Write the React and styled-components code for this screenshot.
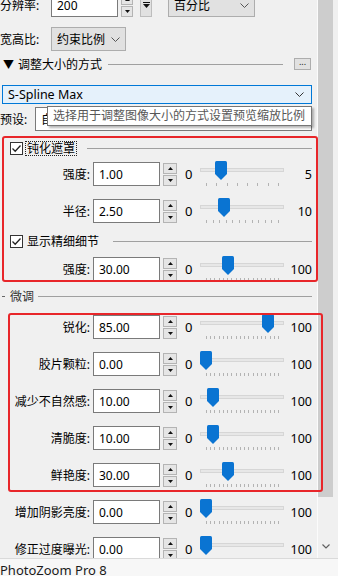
import React from "react";
import styled, { createGlobalStyle } from "styled-components";

const GlobalStyle = createGlobalStyle`
  html, body {
    margin: 0;
    padding: 0;
    background: #f0f0f0;
    overflow: hidden;
  }
  body {
    font-family: "Noto Sans", "Noto Sans CJK SC", sans-serif;
    font-size: 12px;
    color: #000;
  }
`;

const Window = styled.div`
  width: 338px;
  height: 576px;
  display: flex;
  flex-direction: column;
  background: #f0f0f0;
`;

const Main = styled.div`
  display: flex;
  height: 558px;
  overflow: hidden;
`;

const Panel = styled.div`
  width: 317px;
  flex: none;
`;

// scrolled a few pixels down, as in the capture
const Content = styled.div`
  margin-top: -7px;
  display: flex;
  flex-direction: column;
`;

const ScrollBar = styled.div`
  width: 21px;
  flex: none;
  box-sizing: border-box;
  border-left: 1px solid #fbfbfb;
  display: flex;
  flex-direction: column;
`;

const ScrollThumb = styled.div`
  width: 15px;
  height: 497px;
  background: #cdcdcd;
`;

const ScrollArrow = styled.div`
  margin: 47px 0 0 4px;
  line-height: 0;
`;

const StatusBar = styled.div`
  height: 18px;
  box-sizing: border-box;
  border-top: 1px solid #dadada;
  background: #f7f7f7;
  padding-top: 3px;
  font-size: 13px;
  line-height: 16px;
  color: #1a1a1a;
  overflow: hidden;
  white-space: nowrap;
`;

const TopRow = styled.div`
  display: flex;
  align-items: center;
  height: 24px;
  margin-top: ${({ $mt }) => $mt || 0}px;
`;

const TopLabel = styled.span`
  width: ${({ $w }) => $w}px;
  flex: none;
  white-space: nowrap;
`;

const TextBox = styled.div`
  width: ${({ $w }) => $w}px;
  height: 24px;
  flex: none;
  box-sizing: border-box;
  border: 1px solid #7a7a7a;
  background: #fff;
  padding-left: 5px;
  display: flex;
  align-items: center;
  white-space: nowrap;
  overflow: hidden;
`;

const Spin = styled.div`
  display: flex;
  flex-direction: column;
  gap: 1px;
  width: ${({ $w }) => $w}px;
  margin-left: ${({ $ml }) => $ml || 0}px;
  flex: none;
`;

const SpinBtn = styled.div`
  height: 11px;
  box-sizing: border-box;
  border: 1px solid #b4b4b4;
  background: #e5e5e5;
  display: flex;
  align-items: center;
  justify-content: center;
  line-height: 0;
`;

const IconBtn = styled.div`
  width: 12px;
  height: 24px;
  margin-left: 7px;
  flex: none;
  box-sizing: border-box;
  border: 1px solid #bdbdbd;
  background: #e1e1e1;
  display: flex;
  align-items: center;
  justify-content: center;
  line-height: 0;
`;

const Combo = styled.div`
  width: ${({ $w }) => ($w ? `${$w}px` : "auto")};
  flex: ${({ $w }) => ($w ? "none" : "1")};
  height: 24px;
  margin-left: ${({ $ml }) => $ml || 0}px;
  box-sizing: border-box;
  border: 1px solid ${({ $active }) => ($active ? "#0078d7" : "#adadad")};
  background: ${({ $active }) => ($active ? "#e5f1fb" : "#e1e1e1")};
  display: flex;
  align-items: center;
  justify-content: space-between;
  padding: 0 5px 0 5px;
  white-space: nowrap;
  font-size: ${({ $active }) => ($active ? "12.5px" : "12px")};
`;

const Header = styled.div`
  display: flex;
  align-items: center;
  height: 16px;
  margin-top: 5px;
  padding-left: 3px;
`;

const Arrow = styled.span`
  font-size: 11px;
  margin-right: 4px;
`;

const Rule = styled.div`
  flex: 1;
  height: 1px;
  background: #a0a0a0;
  margin: ${({ $m }) => $m};
`;

const MoreBtn = styled.div`
  width: 17px;
  height: 12px;
  margin-right: 6px;
  box-sizing: border-box;
  border: 1px solid #adadad;
  background: #e1e1e1;
  font-size: 9px;
  line-height: 6px;
  text-align: center;
  color: #222;
`;

const MethodCombo = styled(Combo)`
  margin: 13px 5px 0 2px;
  padding: 0 7px 0 5px;
`;

const PresetRow = styled.div`
  position: relative;
  display: flex;
  align-items: center;
  height: 24px;
  margin-top: 3px;
  padding-right: 5px;
`;

const PresetBox = styled(TextBox)`
  flex: 1;
  width: auto;
`;

const Tooltip = styled.div`
  position: absolute;
  left: 47px;
  top: -1px;
  width: 265px;
  height: 20px;
  box-sizing: border-box;
  border: 1px solid #767676;
  background: #fff;
  box-shadow: 2px 2px 2px rgba(0, 0, 0, 0.28);
  padding-left: 5px;
  color: #575757;
  line-height: 18px;
  white-space: nowrap;
  z-index: 2;
`;

// red annotation rectangle drawn on top of the panel
const Marked = styled.div`
  position: relative;
  display: flex;
  flex-direction: column;
  margin-top: ${({ $mt }) => $mt}px;
  padding: ${({ $pad }) => $pad};
  &::after {
    content: "";
    position: absolute;
    inset: ${({ $inset }) => $inset};
    border: 2.5px solid #e8262a;
    border-radius: 3px;
    pointer-events: none;
    z-index: 3;
  }
`;

const CheckRow = styled.div`
  display: flex;
  align-items: center;
  height: 14px;
  margin-top: ${({ $mt }) => $mt}px;
  padding-left: 10px;
`;

const CheckBox = styled.span`
  width: 13px;
  height: 13px;
  flex: none;
  box-sizing: border-box;
  border: 1px solid #333;
  background: #fff;
  line-height: 0;
`;

const CheckText = styled.span`
  margin-left: 2px;
  padding: 0 1px;
  line-height: 13px;
  border: 1px dotted ${({ $focus }) => ($focus ? "#222" : "transparent")};
  white-space: nowrap;
`;

const SubHeader = styled.div`
  display: flex;
  align-items: center;
  height: 14px;
  margin-top: 8px;
  padding-left: 2px;
  color: #333;
`;

const Dash = styled.span`
  width: 3px;
  height: 1px;
  background: #666;
  margin-right: 5px;
`;

const ParamRow = styled.div`
  display: grid;
  grid-template-columns: 90px 67px 14px 17px 84px 1fr;
  column-gap: 3px;
  align-items: center;
  height: 24px;
  margin-top: ${({ $mt }) => ($mt === undefined ? 13 : $mt)}px;
`;

const ParamLabel = styled.span`
  text-align: right;
  white-space: nowrap;
`;

const MinLabel = styled.span`
  padding-left: 5px;
  font-size: 13px;
`;

const MaxLabel = styled.span`
  text-align: right;
  padding-right: 5px;
  font-size: 12.5px;
`;

const Slider = styled.div`
  position: relative;
  height: 24px;
`;

const Track = styled.div`
  margin-top: 6px;
  height: 4px;
  box-sizing: border-box;
  border: 1px solid #d6d6d6;
  background: #e7e7e7;
`;

const Ticks = styled.div`
  display: flex;
  justify-content: space-between;
  margin-top: 11px;
  padding: 0 5px 0 6px;
`;

const Tick = styled.span`
  width: 1px;
  height: 3px;
  background: #b3b3b3;
`;

const Thumb = styled.div`
  position: absolute;
  top: -1px;
  width: 12px;
  height: 19px;
  line-height: 0;
`;

const Chevron = ({ color = "#555" }) => (
  <svg width="9" height="5" viewBox="0 0 9 5">
    <path d="M0.5 0.5 L4.5 4.5 L8.5 0.5" fill="none" stroke={color} strokeWidth="1" />
  </svg>
);

const Tri = ({ up }) => (
  <svg width="5" height="3" viewBox="0 0 5 3">
    <path d={up ? "M0 3 L2.5 0 L5 3 Z" : "M0 0 L5 0 L2.5 3 Z"} fill="#111" />
  </svg>
);

const SpinBox = ({ w, ml }) => (
  <Spin $w={w} $ml={ml}>
    <SpinBtn>
      <Tri up />
    </SpinBtn>
    <SpinBtn>
      <Tri />
    </SpinBtn>
  </Spin>
);

const Check = () => (
  <CheckBox>
    <svg width="11" height="11" viewBox="0 0 11 11">
      <path d="M1.5 5.5 L4.2 8.2 L9.5 2.5" fill="none" stroke="#222" strokeWidth="1.3" />
    </svg>
  </CheckBox>
);

const Param = ({ label, value, max, pct, ticks, mt }) => (
  <ParamRow $mt={mt}>
    <ParamLabel>{label}</ParamLabel>
    <TextBox $w={67}>{value}</TextBox>
    <SpinBox w={14} />
    <MinLabel>0</MinLabel>
    <Slider>
      <Track />
      <Ticks>
        {Array.from({ length: ticks + 1 }, (_, i) => (
          <Tick key={i} />
        ))}
      </Ticks>
      <Thumb style={{ left: Math.round(pct * 73) }}>
        <svg width="12" height="19" viewBox="0 0 12 19">
          <path
            d="M0 1.5 Q0 0 1.5 0 H10.5 Q12 0 12 1.5 V13 L6 19 L0 13 Z"
            fill="#0a74d2"
          />
        </svg>
      </Thumb>
    </Slider>
    <MaxLabel>{max}</MaxLabel>
  </ParamRow>
);

const fine = [
  { label: "锐化:", value: "85.00", pct: 0.85, mt: 0 },
  { label: "胶片颗粒:", value: "0.00", pct: 0 },
  { label: "减少不自然感:", value: "10.00", pct: 0.1 },
  { label: "清脆度:", value: "10.00", pct: 0.1 },
  { label: "鲜艳度:", value: "30.00", pct: 0.3 },
];

const App = () => (
  <>
    <GlobalStyle />
    <Window>
      <Main>
        <Panel>
          <Content>
            <TopRow>
              <TopLabel $w={51}>分辨率:</TopLabel>
              <TextBox $w={67}>200</TextBox>
              <SpinBox w={12} ml={3} />
              <IconBtn>
                <svg width="7" height="6" viewBox="0 0 7 6">
                  <rect x="0" y="0" width="7" height="1" fill="#111" />
                  <path d="M0 2 L7 2 L3.5 6 Z" fill="#111" />
                </svg>
              </IconBtn>
              <Combo $w={87} $ml={16}>
                百分比
                <Chevron />
              </Combo>
            </TopRow>

            <TopRow $mt={10}>
              <TopLabel $w={51}>宽高比:</TopLabel>
              <Combo $w={75}>
                约束比例
                <Chevron />
              </Combo>
            </TopRow>

            <Header>
              <Arrow>▼</Arrow>
              调整大小的方式
              <Rule $m="0 11px 0 6px" />
              <MoreBtn>...</MoreBtn>
            </Header>

            <MethodCombo $active>
              S-Spline Max
              <Chevron color="#333" />
            </MethodCombo>

            <PresetRow>
              <TopLabel $w={35}>预设:</TopLabel>
              <PresetBox>自定义</PresetBox>
              <Tooltip>选择用于调整图像大小的方式设置预览缩放比例</Tooltip>
            </PresetRow>

            <Marked $mt={5} $pad="0" $inset="0 -1px -1px 2px">
              <CheckRow $mt={5}>
                <Check />
                <CheckText $focus>钝化遮罩</CheckText>
                <Rule $m="0 5px 0 10px" />
              </CheckRow>
              <Param label="强度:" value="1.00" max="5" pct={0.2} ticks={7} mt={7} />
              <Param label="半径:" value="2.50" max="10" pct={0.25} ticks={11} />
              <CheckRow $mt={11}>
                <Check />
                <CheckText>显示精细细节</CheckText>
                <Rule $m="0 5px 0 12px" />
              </CheckRow>
              <Param label="强度:" value="30.00" max="100" pct={0.3} ticks={17} mt={9} />
            </Marked>

            <SubHeader>
              <Dash />
              微调
              <Rule $m="0 5px 0 4px" />
            </SubHeader>

            <Marked $mt={10} $pad="2px 0 5px" $inset="0 -6px 0 8px">
              {fine.map((f) => (
                <Param key={f.label} {...f} max="100" ticks={17} />
              ))}
            </Marked>

            <Param label="增加阴影亮度:" value="0.00" max="100" pct={0} ticks={17} mt={8} />
            <Param label="修正过度曝光:" value="0.00" max="100" pct={0} ticks={17} />
          </Content>
        </Panel>
        <ScrollBar>
          <ScrollThumb />
          <ScrollArrow>
            <svg width="8" height="5" viewBox="0 0 8 5">
              <path d="M0.5 0.5 L4 4 L7.5 0.5" fill="none" stroke="#606060" strokeWidth="1.2" />
            </svg>
          </ScrollArrow>
        </ScrollBar>
      </Main>
      <StatusBar>PhotoZoom Pro 8</StatusBar>
    </Window>
  </>
);

export default App;
